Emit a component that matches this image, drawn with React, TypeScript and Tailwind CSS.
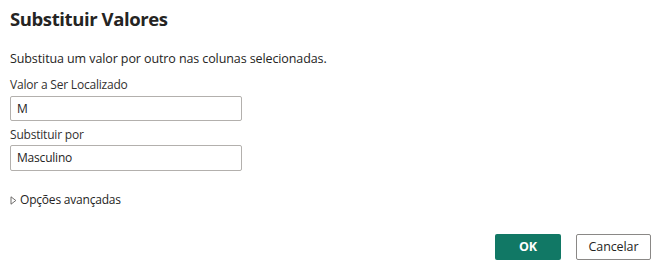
import React from "react";

export default function App() {
  return (
    <div className="w-[658px] h-[267px] bg-white font-['Open_Sans',sans-serif] text-[#252423] flex flex-col px-[10px]">
      {/* Header */}
      <h1 className="mt-[6px] text-[18.5px] font-bold leading-[26px] tracking-[-0.4px]">
        Substituir Valores
      </h1>
      <p className="mt-[18px] text-[12.5px] leading-[18px] tracking-[-0.1px]">
        Substitua um valor por outro nas colunas selecionadas.
      </p>

      {/* Fields */}
      <label className="mt-[9px] text-[12px] leading-[16px] text-[#323130] tracking-[-0.2px]">
        Valor a Ser Localizado
      </label>
      <div className="mt-[3px] w-[232px] h-[25px] border border-[#b3b0ad] rounded-[2px] flex items-center px-[6px] text-[12px] tracking-[-0.2px]">
        M
      </div>
      <label className="mt-[6px] text-[12px] leading-[16px] text-[#323130] tracking-[-0.2px]">
        Substituir por
      </label>
      <div className="mt-[2px] w-[232px] h-[26px] border border-[#b3b0ad] rounded-[2px] flex items-center px-[6px] text-[12px] tracking-[-0.2px]">
        Masculino
      </div>

      {/* Advanced */}
      <div className="mt-[20px] flex items-center gap-[3px] text-[12px] tracking-[-0.2px]">
        <svg width="7" height="9" viewBox="0 0 7 9" className="text-[#605e5c]">
          <path d="M1 0.8 L5.8 4.5 L1 8.2 Z" fill="none" stroke="currentColor" strokeWidth="0.9" />
        </svg>
        <span>Opções avançadas</span>
      </div>

      {/* Footer */}
      <div className="mt-auto mb-[7px] flex justify-end gap-[15px] mr-[-3px]">
        <button className="w-[66px] h-[26px] rounded-[2px] bg-[#117865] text-white text-[12.5px] font-bold">
          OK
        </button>
        <button className="w-[75px] h-[26px] rounded-[2px] border border-[#8a8886] bg-white text-[12.5px] tracking-[-0.1px]">
          Cancelar
        </button>
      </div>
    </div>
  );
}
